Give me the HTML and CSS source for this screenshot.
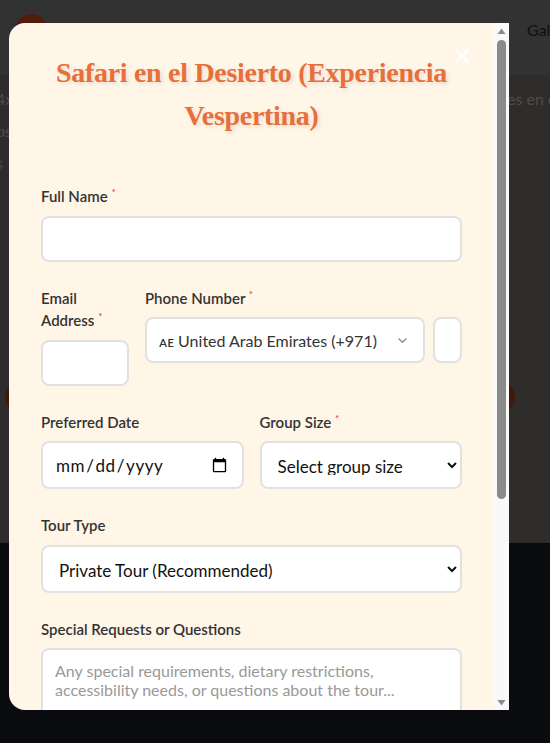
FILE: index.html
```html
<!DOCTYPE html>
<html lang="es">
<head>
<meta charset="utf-8">
<title>Safari en el Desierto</title>
<link rel="stylesheet" href="styles.css">
</head>
<body>
<div class="page">
  <header class="site-header">
    <div class="logo"></div>
    <nav class="nav"><span>Galería</span></nav>
  </header>
  <main class="hero">
    <div class="hero-row"><span class="hero-left">4x4</span><span class="hero-right">es en el</span></div>
    <div class="hero-row"><span class="hero-left">os</span><span class="hero-right"></span></div>
    <div class="hero-row"><span class="hero-left">s</span><span class="hero-right"></span></div>
    <span class="carousel-btn prev"></span>
    <span class="carousel-btn next"></span>
  </main>
  <footer class="site-footer"></footer>
</div>

<div class="overlay">
  <div class="modal">
    <div class="modal-body">
      <button class="close-btn" type="button" aria-label="Close">
        <svg width="16" height="16" viewBox="0 0 16 16"><path d="M1.5 1.5 L14.5 14.5 M14.5 1.5 L1.5 14.5" stroke="#ffffff" stroke-width="3"/></svg>
      </button>
      <h2 class="modal-title">Safari en el Desierto (Experiencia Vespertina)</h2>
      <form class="booking-form">
        <div class="field">
          <label class="field-label">Full Name <span class="req">*</span></label>
          <input class="control" type="text">
        </div>

        <div class="row row-contact">
          <div class="field">
            <label class="field-label">Email Address <span class="req">*</span></label>
            <input class="control" type="email">
          </div>
          <div class="field">
            <label class="field-label">Phone Number <span class="req">*</span></label>
            <div class="phone-group">
              <div class="phone-select-wrap">
                <select class="control phone-select">
                  <option>ᴀᴇ United Arab Emirates (+971)</option>
                </select>
                <svg class="phone-chevron" width="9" height="5" viewBox="0 0 9 5"><path d="M0.5 0.5 L4.5 4.3 L8.5 0.5" fill="none" stroke="#8a8a8a" stroke-width="1.3"/></svg>
              </div>
              <input class="control phone-input" type="tel">
            </div>
          </div>
        </div>

        <div class="row row-half">
          <div class="field">
            <label class="field-label">Preferred Date</label>
            <input class="control control-tall date-input" type="date">
          </div>
          <div class="field">
            <label class="field-label">Group Size <span class="req">*</span></label>
            <select class="control control-tall native-select">
              <option>Select group size</option>
            </select>
          </div>
        </div>

        <div class="field">
          <label class="field-label">Tour Type</label>
          <select class="control control-tall native-select">
            <option>Private Tour (Recommended)</option>
          </select>
        </div>

        <div class="field">
          <label class="field-label">Special Requests or Questions</label>
          <textarea class="control textarea" placeholder="Any special requirements, dietary restrictions, accessibility needs, or questions about the tour..."></textarea>
        </div>

        <button class="submit-btn" type="button">Submit Booking Request</button>
      </form>
    </div>
    <div class="scrollbar" aria-hidden="true">
      <div class="sb-btn">
        <svg width="15" height="15" viewBox="0 0 15 15"><path d="M3.5 11 L7.5 5.5 L11.5 11 Z" fill="#8a8a8a"/></svg>
      </div>
      <div class="sb-track"><div class="sb-thumb"></div></div>
      <div class="sb-btn">
        <svg width="15" height="15" viewBox="0 0 15 15"><path d="M3.5 5 L11.5 5 L7.5 10.5 Z" fill="#8a8a8a"/></svg>
      </div>
    </div>
  </div>
</div>
</body>
</html>
```
FILE: styles.css
```css
* {
  box-sizing: border-box;
}

html,
body {
  margin: 0;
  height: 100%;
}

body {
  font-family: "Lato", "Open Sans", sans-serif;
  background: #14161c;
  overflow: hidden;
}

/* underlying page */
.page {
  height: 743px;
  display: flex;
  flex-direction: column;
}

.site-header {
  height: 75px;
  flex: none;
  background: #646464;
  display: flex;
  align-items: flex-start;
  padding: 14px 0 0 16px;
  overflow: hidden;
}

.logo {
  width: 31px;
  height: 31px;
  border-radius: 50%;
  background: #a43a10;
  flex: none;
}

.nav {
  display: flex;
  gap: 24px;
  margin-left: 480px;
  padding-top: 6px;
  font-size: 16px;
  color: #202020;
  white-space: nowrap;
}

.hero {
  height: 468px;
  flex: none;
  background: #5c5a56;
  position: relative;
  padding-top: 8px;
  overflow: hidden;
}

.hero-row {
  display: grid;
  grid-template-columns: 507px 1fr;
  height: 32px;
  line-height: 32px;
  font-size: 16px;
  color: #9a9894;
  white-space: nowrap;
  overflow: hidden;
}

.hero-left {
  margin-left: -4px;
  overflow: hidden;
}

.hero-right {
  overflow: hidden;
}

.carousel-btn {
  position: absolute;
  top: 305px;
  width: 34px;
  height: 34px;
  border-radius: 50%;
  background: #7a3416;
}

.carousel-btn.prev {
  left: 5px;
}

.carousel-btn.next {
  left: 481px;
}

.site-footer {
  flex: 1;
  background: #14161c;
}

/* overlay + modal */
.overlay {
  position: fixed;
  inset: 0;
  background: rgba(0, 0, 0, 0.5);
}

.modal {
  margin: 23px 0 0 9px;
  width: 500px;
  height: 687px;
  display: flex;
  overflow: hidden;
  background: #fff6e8;
  border-radius: 16px 0 0 16px;
}

.modal-body {
  position: relative;
  flex: 1;
  min-width: 0;
  overflow: hidden;
  padding: 28px 32px 32px;
}

.scrollbar {
  flex: 0 0 15px;
  display: flex;
  flex-direction: column;
  background: #f9f9f9;
}

.sb-btn {
  height: 15px;
  flex: none;
  display: flex;
}

.sb-track {
  flex: 1;
  padding: 2px 3px 0;
}

.sb-thumb {
  height: 459px;
  border-radius: 5px;
  background: #8a8a8a;
}

.close-btn {
  position: absolute;
  top: 17px;
  right: 16px;
  width: 32px;
  height: 32px;
  padding: 0;
  border: 0;
  background: transparent;
  display: flex;
  align-items: center;
  justify-content: center;
  cursor: pointer;
}

.modal-title {
  margin: 0 0 48px;
  text-align: center;
  font-family: "Liberation Serif", "Times New Roman", serif;
  font-weight: 700;
  font-size: 28px;
  letter-spacing: -0.3px;
  line-height: 43.2px;
  color: #e86f3a;
  text-shadow: 2px 2px 4px rgba(0, 0, 0, 0.1);
}

.field {
  margin-bottom: 25px;
}

.field-label {
  display: block;
  font-size: 15px;
  line-height: 22.5px;
  font-weight: 600;
  color: #333333;
  margin-bottom: 8px;
}

.req {
  color: #e05252;
  font-size: 10px;
  vertical-align: top;
  line-height: 14px;
}

.control {
  display: block;
  width: 100%;
  height: 46px;
  padding: 12px;
  border: 2px solid #e1e1e1;
  border-radius: 8px;
  background: #ffffff;
  font-family: "Lato", "Open Sans", sans-serif;
  font-size: 16px;
  color: #222222;
  outline: none;
}

.control-tall {
  height: 48px;
}

.date-input {
  font-size: 17px;
  letter-spacing: 0.6px;
  color: #111111;
}

.row {
  display: grid;
  column-gap: 16px;
}

.row-contact {
  grid-template-columns: 88px 1fr;
}

.row-half {
  grid-template-columns: 1fr 1fr;
}

.phone-group {
  display: flex;
  gap: 8px;
}

.phone-select-wrap {
  position: relative;
  flex: 0 0 280px;
}

.phone-select {
  appearance: none;
  -webkit-appearance: none;
  padding-right: 36px;
  color: #333333;
}

.phone-chevron {
  position: absolute;
  right: 18px;
  top: 21px;
  pointer-events: none;
}

.phone-input {
  flex: 1;
  min-width: 0;
  padding: 12px 4px;
}

.native-select {
  color: #111111;
  font-size: 17px;
}

.textarea {
  height: 120px;
  resize: vertical;
  line-height: 1.15;
}

.textarea::placeholder {
  color: #999999;
}

.submit-btn {
  display: block;
  width: 100%;
  height: 52px;
  border: 0;
  border-radius: 8px;
  background: #e86f3a;
  color: #ffffff;
  font-family: "Lato", "Open Sans", sans-serif;
  font-size: 16px;
  font-weight: 700;
}
```
